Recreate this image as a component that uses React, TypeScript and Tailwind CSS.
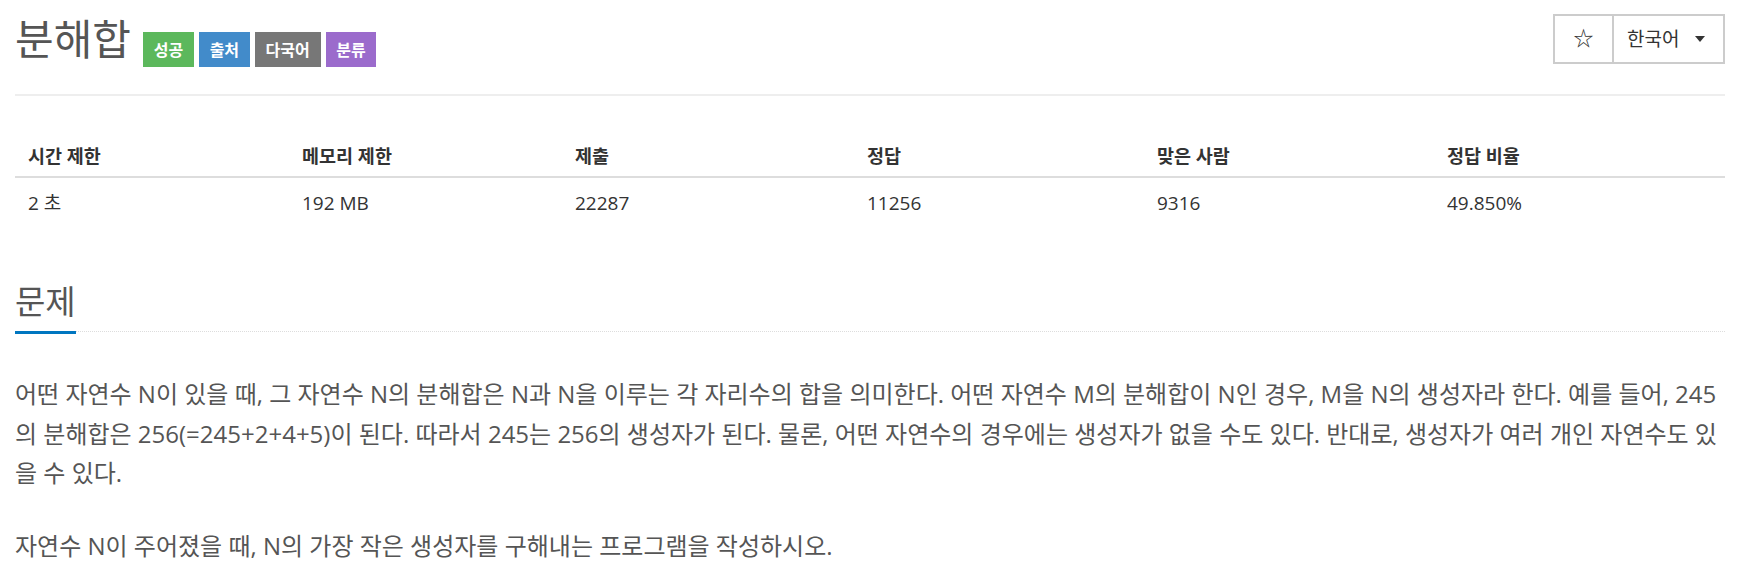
const FONT = "font-['Open_Sans','Noto_Sans_CJK_KR',sans-serif]";

const badges = [
  { label: "성공", className: "bg-[#5cb85c]" },
  { label: "출처", className: "bg-[#428bca]" },
  { label: "다국어", className: "bg-[#777777]" },
  { label: "분류", className: "bg-[#9b6bcc]" },
];

const stats = [
  { head: "시간 제한", value: "2 초" },
  { head: "메모리 제한", value: "192 MB" },
  { head: "제출", value: "22287" },
  { head: "정답", value: "11256" },
  { head: "맞은 사람", value: "9316" },
  { head: "정답 비율", value: "49.850%" },
];

export default function App() {
  return (
    <div className={`${FONT} min-h-[587px] bg-white px-[15px] text-[#333]`}>
      {/* page header */}
      <div className="flex h-[96px] items-start justify-between border-b-2 border-[#eee]">
        <div className="flex items-start">
          <h1 className="mt-[15px] text-[42px] leading-[48px] font-normal text-[#555]">분해합</h1>
          <div className="mt-[32px] ml-[12px] flex gap-[5px]">
            {badges.map((b) => (
              <span
                key={b.label}
                className={`${b.className} flex h-[35px] items-center px-[10.75px] text-[16px] font-bold text-white`}
              >
                {b.label}
              </span>
            ))}
          </div>
        </div>
        <div className="mt-[14px] flex h-[50px] border-2 border-[#ccc]">
          <button className="flex w-[57px] items-center justify-center text-[20px] text-[#333]">☆</button>
          <button className="flex w-[111px] items-center border-l-2 border-[#ccc] pl-[13px] text-[19px] text-[#333]">
            한국어
            <span className="ml-[16px] h-0 w-0 border-x-[5.5px] border-t-[6px] border-x-transparent border-t-[#333]" />
          </button>
        </div>
      </div>

      {/* stats table */}
      <div className="mt-[32px]">
        <div className="grid h-[50px] grid-cols-[274px_273px_292px_290px_290px_1fr] items-center border-b-2 border-[#ddd] pt-[7px] text-[18.5px] font-bold">
          {stats.map((s) => (
            <div key={s.head} className="pl-[13px]">{s.head}</div>
          ))}
        </div>
        <div className="grid h-[50px] grid-cols-[274px_273px_292px_290px_290px_1fr] items-center text-[19px]">
          {stats.map((s) => (
            <div key={s.head} className="pl-[13px]">{s.value}</div>
          ))}
        </div>
      </div>

      {/* problem section */}
      <div className="mt-[54px] flex items-end border-b border-dotted border-[#ddd]">
        <h2 className="-mb-[3px] border-b-[3px] border-[#0076c0] pb-[9px] text-[33px] leading-[40px] font-normal text-[#555]">
          문제
        </h2>
      </div>
      <div className="mt-[42px] text-[24px] leading-[39.5px] text-[#555]">
        <p>
          어떤 자연수 N이 있을 때, 그 자연수 N의 분해합은 N과 N을 이루는 각 자리수의 합을 의미한다. 어떤 자연수 M의 분해합이 N인 경우, M을 N의 생성자라 한다. 예를 들어, 245의 분해합은 256(=245+2+4+5)이 된다. 따라서 245는 256의 생성자가 된다. 물론, 어떤 자연수의 경우에는 생성자가 없을 수도 있다. 반대로, 생성자가 여러 개인 자연수도 있을 수 있다.
        </p>
        <p className="mt-[33px]">자연수 N이 주어졌을 때, N의 가장 작은 생성자를 구해내는 프로그램을 작성하시오.</p>
      </div>
    </div>
  );
}
